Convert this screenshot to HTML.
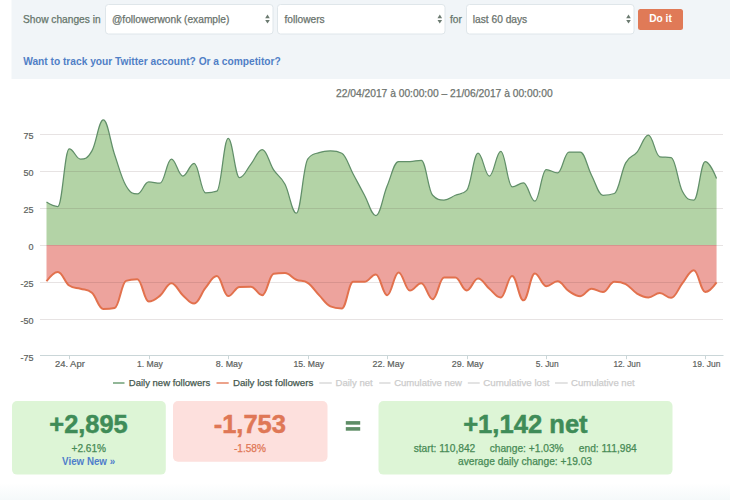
<!DOCTYPE html>
<html><head><meta charset="utf-8"><style>
html,body{margin:0;padding:0;background:#fff;width:730px;height:500px;overflow:hidden}
svg{display:block;font-family:"Liberation Sans", sans-serif}
</style></head><body>
<svg width="730" height="500" viewBox="0 0 730 500">
<defs><linearGradient id="bot" x1="0" y1="0" x2="0" y2="1"><stop offset="0" stop-color="#fff"/><stop offset="1" stop-color="#f5f9fa"/></linearGradient></defs>
<rect x="0" y="483" width="730" height="17" fill="url(#bot)"/>
<!-- top panel -->
<rect x="11.5" y="0" width="718.5" height="79" fill="#f1f5f8"/>
<text x="23" y="22.5" font-size="10.2" fill="#66756b" stroke="#66756b" stroke-width="0.25">Show changes in</text>
<rect x="105.5" y="4.5" width="167.5" height="29.5" rx="3" fill="#fff" stroke="#dfe6ea"/>
<text x="112" y="22.5" font-size="10.2" fill="#6a736d" stroke="#6a736d" stroke-width="0.25">@followerwonk (example)</text>
<path d="M265.2,18.3 L267.5,14.6 L269.8,18.3 Z" fill="#6b7a70"/><path d="M265.2,19.9 L267.5,23.6 L269.8,19.9 Z" fill="#6b7a70"/>
<rect x="277.5" y="4.5" width="167.5" height="29.5" rx="3" fill="#fff" stroke="#dfe6ea"/>
<text x="284.5" y="22.5" font-size="10.2" fill="#6a736d" stroke="#6a736d" stroke-width="0.25">followers</text>
<path d="M437.5,18.3 L439.8,14.6 L442.1,18.3 Z" fill="#6b7a70"/><path d="M437.5,19.9 L439.8,23.6 L442.1,19.9 Z" fill="#6b7a70"/>
<text x="450" y="22.5" font-size="10.2" fill="#66756b" stroke="#66756b" stroke-width="0.25">for</text>
<rect x="466.5" y="4.5" width="167.5" height="29.5" rx="3" fill="#fff" stroke="#dfe6ea"/>
<text x="472.8" y="22.5" font-size="10.2" fill="#6a736d" stroke="#6a736d" stroke-width="0.25">last 60 days</text>
<path d="M626.2,18.3 L628.5,14.6 L630.8,18.3 Z" fill="#6b7a70"/><path d="M626.2,19.9 L628.5,23.6 L630.8,19.9 Z" fill="#6b7a70"/>
<rect x="638" y="9" width="45" height="21" rx="2.5" fill="#e07a57"/>
<text x="660.5" y="21.9" font-size="10.2" font-weight="bold" fill="#fff" text-anchor="middle">Do it</text>
<text x="23.2" y="65.4" font-size="10.2" font-weight="bold" fill="#507fc6">Want to track your Twitter account? Or a competitor?</text>
<!-- chart -->
<text x="336" y="97.2" font-size="10.26" fill="#6d736e" stroke="#6d736e" stroke-width="0.25">22/04/2017 à 00:00:00 – 21/06/2017 à 00:00:00</text>
<path d="M46.50,202.08 C46.50,202.08 53.31,206.52 57.86,206.52 C62.40,206.52 64.67,148.80 69.21,148.80 C73.76,148.80 76.03,159.16 80.57,159.16 C85.11,159.16 87.39,158.72 91.93,150.87 C96.47,143.03 98.74,119.94 103.28,119.94 C107.83,119.94 110.10,141.55 114.64,154.72 C119.18,167.89 121.46,177.96 126.00,185.80 C130.54,193.64 132.81,193.94 137.36,193.94 C141.90,193.94 144.17,181.95 148.71,181.95 C153.26,181.95 155.53,183.14 160.07,183.14 C164.61,183.14 166.88,159.16 171.43,159.16 C175.97,159.16 178.24,176.03 182.78,176.03 C187.33,176.03 189.60,163.30 194.14,163.30 C198.68,163.30 200.96,192.76 205.50,192.76 C210.04,192.76 212.31,192.76 216.85,191.13 C221.40,189.50 223.67,138.44 228.21,138.44 C232.75,138.44 235.03,177.66 239.57,177.66 C244.11,177.66 246.38,169.67 250.93,164.04 C255.47,158.42 257.74,149.54 262.28,149.54 C266.83,149.54 269.10,163.01 273.64,169.96 C278.18,176.92 280.45,175.68 285.00,184.32 C289.54,192.96 291.81,213.18 296.35,213.18 C300.90,213.18 303.17,165.67 307.71,159.16 C312.25,152.65 314.53,154.31 319.07,152.65 C323.61,150.99 325.88,150.87 330.42,150.87 C334.97,150.87 337.24,150.87 341.78,153.24 C346.32,155.61 348.60,165.55 353.14,173.96 C357.68,182.37 359.95,186.95 364.50,195.27 C369.04,203.59 371.31,215.55 375.85,215.55 C380.40,215.55 382.67,196.60 387.21,185.80 C391.75,175.00 394.02,161.53 398.57,161.53 C403.11,161.53 405.38,161.53 409.92,161.53 C414.47,161.53 416.74,160.34 421.28,160.34 C425.82,160.34 428.10,190.54 432.64,195.27 C437.18,200.01 439.45,200.01 444.00,200.01 C448.54,200.01 450.81,197.20 455.35,195.27 C459.89,193.35 462.17,195.27 466.71,190.39 C471.25,185.50 473.52,153.24 478.07,153.24 C482.61,153.24 484.88,176.03 489.42,176.03 C493.97,176.03 496.24,151.32 500.78,151.32 C505.32,151.32 507.59,186.84 512.14,186.84 C516.68,186.84 518.95,182.84 523.49,182.84 C528.04,182.84 530.31,201.19 534.85,201.19 C539.39,201.19 541.67,169.52 546.21,169.52 C550.75,169.52 553.02,172.92 557.56,172.92 C562.11,172.92 564.38,152.06 568.92,152.06 C573.46,152.06 575.74,152.06 580.28,152.06 C584.82,152.06 587.09,166.80 591.64,175.44 C596.18,184.08 598.45,195.27 602.99,195.27 C607.54,195.27 609.81,195.27 614.35,193.50 C618.89,191.72 621.16,171.15 625.71,162.86 C630.25,154.57 632.52,157.62 637.06,152.06 C641.61,146.49 643.88,135.04 648.42,135.04 C652.96,135.04 655.24,156.05 659.78,156.79 C664.32,157.53 666.59,156.79 671.13,157.53 C675.68,158.27 677.95,183.14 682.49,191.57 C687.03,200.01 689.31,200.01 693.85,200.01 C698.39,200.01 700.66,161.53 705.21,161.53 C709.75,161.53 716.56,178.40 716.56,178.40 L716.56,245.0 L46.50,245.0 Z" fill="#b3d3a6"/>
<path d="M46.50,281.26 C46.50,281.26 53.31,271.94 57.86,271.94 C62.40,271.94 64.67,282.30 69.21,285.55 C73.76,288.81 76.03,287.36 80.57,288.81 C85.11,290.26 87.39,288.81 91.93,292.80 C96.47,296.80 98.74,309.08 103.28,309.08 C107.83,309.08 110.10,309.08 114.64,308.05 C119.18,307.01 121.46,282.44 126.00,280.82 C130.54,279.19 132.81,279.19 137.36,279.19 C141.90,279.19 144.17,301.54 148.71,301.54 C153.26,301.54 155.53,299.26 160.07,295.62 C164.61,291.98 166.88,283.33 171.43,283.33 C175.97,283.33 178.24,291.12 182.78,295.17 C187.33,299.23 189.60,303.61 194.14,303.61 C198.68,303.61 200.96,293.43 205.50,287.92 C210.04,282.41 212.31,276.08 216.85,276.08 C221.40,276.08 223.67,296.06 228.21,296.06 C232.75,296.06 235.03,287.03 239.57,286.88 C244.11,286.74 246.38,286.74 250.93,286.74 C255.47,286.74 257.74,295.17 262.28,295.17 C266.83,295.17 269.10,274.60 273.64,273.86 C278.18,273.12 280.45,273.12 285.00,273.12 C289.54,273.12 291.81,277.83 296.35,279.78 C300.90,281.73 303.17,279.81 307.71,282.89 C312.25,285.97 314.53,290.47 319.07,295.17 C323.61,299.88 325.88,304.35 330.42,306.42 C334.97,308.49 337.24,308.49 341.78,308.49 C346.32,308.49 348.60,281.85 353.14,281.85 C357.68,281.85 359.95,281.85 364.50,281.85 C369.04,281.85 371.31,274.45 375.85,274.45 C380.40,274.45 382.67,295.17 387.21,295.17 C391.75,295.17 394.02,272.38 398.57,272.38 C403.11,272.38 405.38,290.58 409.92,290.58 C414.47,290.58 416.74,283.18 421.28,283.18 C425.82,283.18 428.10,299.17 432.64,299.17 C437.18,299.17 439.45,277.56 444.00,277.56 C448.54,277.56 450.81,277.56 455.35,277.56 C459.89,277.56 462.17,290.44 466.71,290.44 C471.25,290.44 473.52,278.45 478.07,278.45 C482.61,278.45 484.88,284.99 489.42,288.81 C493.97,292.63 496.24,297.54 500.78,297.54 C505.32,297.54 507.59,276.08 512.14,276.08 C516.68,276.08 518.95,300.35 523.49,300.35 C528.04,300.35 530.31,273.56 534.85,273.56 C539.39,273.56 541.67,286.14 546.21,286.14 C550.75,286.14 553.02,281.26 557.56,281.26 C562.11,281.26 564.38,288.19 568.92,291.18 C573.46,294.17 575.74,296.21 580.28,296.21 C584.82,296.21 587.09,288.66 591.64,288.66 C596.18,288.66 598.45,292.06 602.99,292.06 C607.54,292.06 609.81,281.85 614.35,281.85 C618.89,281.85 621.16,281.85 625.71,284.07 C630.25,286.29 632.52,290.88 637.06,293.54 C641.61,296.21 643.88,297.39 648.42,297.39 C652.96,297.39 655.24,293.10 659.78,293.10 C664.32,293.10 666.59,297.84 671.13,297.84 C675.68,297.84 677.95,288.72 682.49,283.18 C687.03,277.65 689.31,270.16 693.85,270.16 C698.39,270.16 700.66,292.06 705.21,292.06 C709.75,292.06 716.56,282.44 716.56,282.44 L716.56,245.0 L46.50,245.0 Z" fill="#eda39d"/>
<g opacity="0.13"><line x1="40" y1="134.5" x2="723" y2="134.5" stroke="#503030" stroke-width="1"/>
<line x1="40" y1="171.5" x2="723" y2="171.5" stroke="#503030" stroke-width="1"/>
<line x1="40" y1="208.5" x2="723" y2="208.5" stroke="#503030" stroke-width="1"/>
<line x1="40" y1="245.5" x2="723" y2="245.5" stroke="#503030" stroke-width="1"/>
<line x1="40" y1="282.5" x2="723" y2="282.5" stroke="#503030" stroke-width="1"/>
<line x1="40" y1="319.5" x2="723" y2="319.5" stroke="#503030" stroke-width="1"/>
</g>
<path d="M46.50,202.08 C46.50,202.08 53.31,206.52 57.86,206.52 C62.40,206.52 64.67,148.80 69.21,148.80 C73.76,148.80 76.03,159.16 80.57,159.16 C85.11,159.16 87.39,158.72 91.93,150.87 C96.47,143.03 98.74,119.94 103.28,119.94 C107.83,119.94 110.10,141.55 114.64,154.72 C119.18,167.89 121.46,177.96 126.00,185.80 C130.54,193.64 132.81,193.94 137.36,193.94 C141.90,193.94 144.17,181.95 148.71,181.95 C153.26,181.95 155.53,183.14 160.07,183.14 C164.61,183.14 166.88,159.16 171.43,159.16 C175.97,159.16 178.24,176.03 182.78,176.03 C187.33,176.03 189.60,163.30 194.14,163.30 C198.68,163.30 200.96,192.76 205.50,192.76 C210.04,192.76 212.31,192.76 216.85,191.13 C221.40,189.50 223.67,138.44 228.21,138.44 C232.75,138.44 235.03,177.66 239.57,177.66 C244.11,177.66 246.38,169.67 250.93,164.04 C255.47,158.42 257.74,149.54 262.28,149.54 C266.83,149.54 269.10,163.01 273.64,169.96 C278.18,176.92 280.45,175.68 285.00,184.32 C289.54,192.96 291.81,213.18 296.35,213.18 C300.90,213.18 303.17,165.67 307.71,159.16 C312.25,152.65 314.53,154.31 319.07,152.65 C323.61,150.99 325.88,150.87 330.42,150.87 C334.97,150.87 337.24,150.87 341.78,153.24 C346.32,155.61 348.60,165.55 353.14,173.96 C357.68,182.37 359.95,186.95 364.50,195.27 C369.04,203.59 371.31,215.55 375.85,215.55 C380.40,215.55 382.67,196.60 387.21,185.80 C391.75,175.00 394.02,161.53 398.57,161.53 C403.11,161.53 405.38,161.53 409.92,161.53 C414.47,161.53 416.74,160.34 421.28,160.34 C425.82,160.34 428.10,190.54 432.64,195.27 C437.18,200.01 439.45,200.01 444.00,200.01 C448.54,200.01 450.81,197.20 455.35,195.27 C459.89,193.35 462.17,195.27 466.71,190.39 C471.25,185.50 473.52,153.24 478.07,153.24 C482.61,153.24 484.88,176.03 489.42,176.03 C493.97,176.03 496.24,151.32 500.78,151.32 C505.32,151.32 507.59,186.84 512.14,186.84 C516.68,186.84 518.95,182.84 523.49,182.84 C528.04,182.84 530.31,201.19 534.85,201.19 C539.39,201.19 541.67,169.52 546.21,169.52 C550.75,169.52 553.02,172.92 557.56,172.92 C562.11,172.92 564.38,152.06 568.92,152.06 C573.46,152.06 575.74,152.06 580.28,152.06 C584.82,152.06 587.09,166.80 591.64,175.44 C596.18,184.08 598.45,195.27 602.99,195.27 C607.54,195.27 609.81,195.27 614.35,193.50 C618.89,191.72 621.16,171.15 625.71,162.86 C630.25,154.57 632.52,157.62 637.06,152.06 C641.61,146.49 643.88,135.04 648.42,135.04 C652.96,135.04 655.24,156.05 659.78,156.79 C664.32,157.53 666.59,156.79 671.13,157.53 C675.68,158.27 677.95,183.14 682.49,191.57 C687.03,200.01 689.31,200.01 693.85,200.01 C698.39,200.01 700.66,161.53 705.21,161.53 C709.75,161.53 716.56,178.40 716.56,178.40" fill="none" stroke="#618f69" stroke-width="1.25"/>
<path d="M46.50,281.26 C46.50,281.26 53.31,271.94 57.86,271.94 C62.40,271.94 64.67,282.30 69.21,285.55 C73.76,288.81 76.03,287.36 80.57,288.81 C85.11,290.26 87.39,288.81 91.93,292.80 C96.47,296.80 98.74,309.08 103.28,309.08 C107.83,309.08 110.10,309.08 114.64,308.05 C119.18,307.01 121.46,282.44 126.00,280.82 C130.54,279.19 132.81,279.19 137.36,279.19 C141.90,279.19 144.17,301.54 148.71,301.54 C153.26,301.54 155.53,299.26 160.07,295.62 C164.61,291.98 166.88,283.33 171.43,283.33 C175.97,283.33 178.24,291.12 182.78,295.17 C187.33,299.23 189.60,303.61 194.14,303.61 C198.68,303.61 200.96,293.43 205.50,287.92 C210.04,282.41 212.31,276.08 216.85,276.08 C221.40,276.08 223.67,296.06 228.21,296.06 C232.75,296.06 235.03,287.03 239.57,286.88 C244.11,286.74 246.38,286.74 250.93,286.74 C255.47,286.74 257.74,295.17 262.28,295.17 C266.83,295.17 269.10,274.60 273.64,273.86 C278.18,273.12 280.45,273.12 285.00,273.12 C289.54,273.12 291.81,277.83 296.35,279.78 C300.90,281.73 303.17,279.81 307.71,282.89 C312.25,285.97 314.53,290.47 319.07,295.17 C323.61,299.88 325.88,304.35 330.42,306.42 C334.97,308.49 337.24,308.49 341.78,308.49 C346.32,308.49 348.60,281.85 353.14,281.85 C357.68,281.85 359.95,281.85 364.50,281.85 C369.04,281.85 371.31,274.45 375.85,274.45 C380.40,274.45 382.67,295.17 387.21,295.17 C391.75,295.17 394.02,272.38 398.57,272.38 C403.11,272.38 405.38,290.58 409.92,290.58 C414.47,290.58 416.74,283.18 421.28,283.18 C425.82,283.18 428.10,299.17 432.64,299.17 C437.18,299.17 439.45,277.56 444.00,277.56 C448.54,277.56 450.81,277.56 455.35,277.56 C459.89,277.56 462.17,290.44 466.71,290.44 C471.25,290.44 473.52,278.45 478.07,278.45 C482.61,278.45 484.88,284.99 489.42,288.81 C493.97,292.63 496.24,297.54 500.78,297.54 C505.32,297.54 507.59,276.08 512.14,276.08 C516.68,276.08 518.95,300.35 523.49,300.35 C528.04,300.35 530.31,273.56 534.85,273.56 C539.39,273.56 541.67,286.14 546.21,286.14 C550.75,286.14 553.02,281.26 557.56,281.26 C562.11,281.26 564.38,288.19 568.92,291.18 C573.46,294.17 575.74,296.21 580.28,296.21 C584.82,296.21 587.09,288.66 591.64,288.66 C596.18,288.66 598.45,292.06 602.99,292.06 C607.54,292.06 609.81,281.85 614.35,281.85 C618.89,281.85 621.16,281.85 625.71,284.07 C630.25,286.29 632.52,290.88 637.06,293.54 C641.61,296.21 643.88,297.39 648.42,297.39 C652.96,297.39 655.24,293.10 659.78,293.10 C664.32,293.10 666.59,297.84 671.13,297.84 C675.68,297.84 677.95,288.72 682.49,283.18 C687.03,277.65 689.31,270.16 693.85,270.16 C698.39,270.16 700.66,292.06 705.21,292.06 C709.75,292.06 716.56,282.44 716.56,282.44" fill="none" stroke="#e2714d" stroke-width="2"/>
<line x1="40" y1="355.5" x2="723.5" y2="355.5" stroke="#cad6d8" stroke-width="1"/>
<line x1="69.5" y1="356" x2="69.5" y2="359.2" stroke="#cad6d8" stroke-width="1"/>
<line x1="149.5" y1="356" x2="149.5" y2="359.2" stroke="#cad6d8" stroke-width="1"/>
<line x1="228.5" y1="356" x2="228.5" y2="359.2" stroke="#cad6d8" stroke-width="1"/>
<line x1="308.5" y1="356" x2="308.5" y2="359.2" stroke="#cad6d8" stroke-width="1"/>
<line x1="387.5" y1="356" x2="387.5" y2="359.2" stroke="#cad6d8" stroke-width="1"/>
<line x1="467.5" y1="356" x2="467.5" y2="359.2" stroke="#cad6d8" stroke-width="1"/>
<line x1="546.5" y1="356" x2="546.5" y2="359.2" stroke="#cad6d8" stroke-width="1"/>
<line x1="626.5" y1="356" x2="626.5" y2="359.2" stroke="#cad6d8" stroke-width="1"/>
<line x1="705.5" y1="356" x2="705.5" y2="359.2" stroke="#cad6d8" stroke-width="1"/>

<g font-size="9" fill="#5d625e" stroke="#5d625e" stroke-width="0.2">
<text x="33.5" y="138.9" text-anchor="end">75</text>
<text x="33.5" y="175.9" text-anchor="end">50</text>
<text x="33.5" y="212.9" text-anchor="end">25</text>
<text x="33.5" y="249.9" text-anchor="end">0</text>
<text x="33.5" y="286.9" text-anchor="end">-25</text>
<text x="33.5" y="323.9" text-anchor="end">-50</text>
<text x="33.5" y="360.9" text-anchor="end">-75</text>

<text x="54.9" y="366.5" textLength="29.9" lengthAdjust="spacingAndGlyphs">24. Apr</text>
<text x="137.0" y="366.5" textLength="25.9" lengthAdjust="spacingAndGlyphs">1. May</text>
<text x="215.8" y="366.5" textLength="26.7" lengthAdjust="spacingAndGlyphs">8. May</text>
<text x="293.4" y="366.5" textLength="30.8" lengthAdjust="spacingAndGlyphs">15. May</text>
<text x="372.6" y="366.5" textLength="31.5" lengthAdjust="spacingAndGlyphs">22. May</text>
<text x="451.8" y="366.5" textLength="31.7" lengthAdjust="spacingAndGlyphs">29. May</text>
<text x="535.8" y="366.5" textLength="22.9" lengthAdjust="spacingAndGlyphs">5. Jun</text>
<text x="613.4" y="366.5" textLength="27.1" lengthAdjust="spacingAndGlyphs">12. Jun</text>
<text x="692.6" y="366.5" textLength="27.9" lengthAdjust="spacingAndGlyphs">19. Jun</text>

</g>
<!-- legend -->
<g font-size="9.5">
<line x1="113" y1="383" x2="124.5" y2="383" stroke="#4a8754" stroke-width="1.2"/>
<text x="128.8" y="386.3" fill="#45584e" textLength="81.4" lengthAdjust="spacingAndGlyphs" stroke="#45584e" stroke-width="0.25">Daily new followers</text>
<line x1="216.5" y1="383" x2="228.7" y2="383" stroke="#e2714d" stroke-width="1.3"/>
<text x="232.9" y="386.3" fill="#45584e" textLength="80.4" lengthAdjust="spacingAndGlyphs" stroke="#45584e" stroke-width="0.25">Daily lost followers</text>
<line x1="319.3" y1="383" x2="331.8" y2="383" stroke="#d4d4d4" stroke-width="1.3"/>
<text x="335.5" y="386.3" fill="#cccccc" textLength="37.2" lengthAdjust="spacingAndGlyphs" stroke="#cccccc" stroke-width="0.25">Daily net</text>
<line x1="379.2" y1="383" x2="390.5" y2="383" stroke="#d4d4d4" stroke-width="1.3"/>
<text x="394.2" y="386.3" fill="#cccccc" textLength="67.8" lengthAdjust="spacingAndGlyphs" stroke="#cccccc" stroke-width="0.25">Cumulative new</text>
<line x1="467.8" y1="383" x2="479.7" y2="383" stroke="#d4d4d4" stroke-width="1.3"/>
<text x="483.3" y="386.3" fill="#cccccc" textLength="66.2" lengthAdjust="spacingAndGlyphs" stroke="#cccccc" stroke-width="0.25">Cumulative lost</text>
<line x1="555" y1="383" x2="567.7" y2="383" stroke="#d4d4d4" stroke-width="1.3"/>
<text x="571" y="386.3" fill="#cccccc" textLength="63.6" lengthAdjust="spacingAndGlyphs" stroke="#cccccc" stroke-width="0.25">Cumulative net</text>
</g>
<!-- boxes -->
<rect x="12" y="401" width="153.8" height="73.6" rx="5" fill="#ddf5d6"/>
<text x="88.5" y="433" font-size="25.4" font-weight="bold" fill="#3f8c58" stroke="#3f8c58" stroke-width="0.5" text-anchor="middle">+2,895</text>
<text x="88.8" y="451.6" font-size="10.1" fill="#478a55" text-anchor="middle" stroke="#478a55" stroke-width="0.25">+2.61%</text>
<text x="62.1" y="464.5" font-size="10.1" font-weight="bold" fill="#4f7ecb" textLength="53" lengthAdjust="spacingAndGlyphs">View New »</text>
<rect x="173" y="401" width="154.5" height="60.8" rx="5" fill="#fde0dd"/>
<text x="249.8" y="433.2" font-size="25.5" font-weight="bold" fill="#df7756" stroke="#df7756" stroke-width="0.5" text-anchor="middle">-1,753</text>
<text x="249.9" y="451.8" font-size="10.1" fill="#df7756" text-anchor="middle" stroke="#df7756" stroke-width="0.25">-1.58%</text>
<rect x="345.8" y="421.1" width="14.4" height="3.6" fill="#5e8d66"/>
<rect x="345.8" y="427.1" width="14.4" height="3.6" fill="#5e8d66"/>
<rect x="378.5" y="401" width="294" height="73.6" rx="5" fill="#ddf5d6"/>
<text x="525.4" y="433.2" font-size="25.6" font-weight="bold" fill="#3f8c58" stroke="#3f8c58" stroke-width="0.5" text-anchor="middle">+1,142 net</text>
<text x="413.7" y="452" font-size="10.2" fill="#478a55" stroke="#478a55" stroke-width="0.25">start: 110,842</text>
<text x="489.7" y="452" font-size="10.2" fill="#478a55" stroke="#478a55" stroke-width="0.25">change: +1.03%</text>
<text x="578.8" y="452" font-size="10.2" fill="#478a55" stroke="#478a55" stroke-width="0.25">end: 111,984</text>
<text x="525" y="464.5" font-size="10.2" fill="#478a55" text-anchor="middle" stroke="#478a55" stroke-width="0.25">average daily change: +19.03</text>
</svg>
</body></html>
